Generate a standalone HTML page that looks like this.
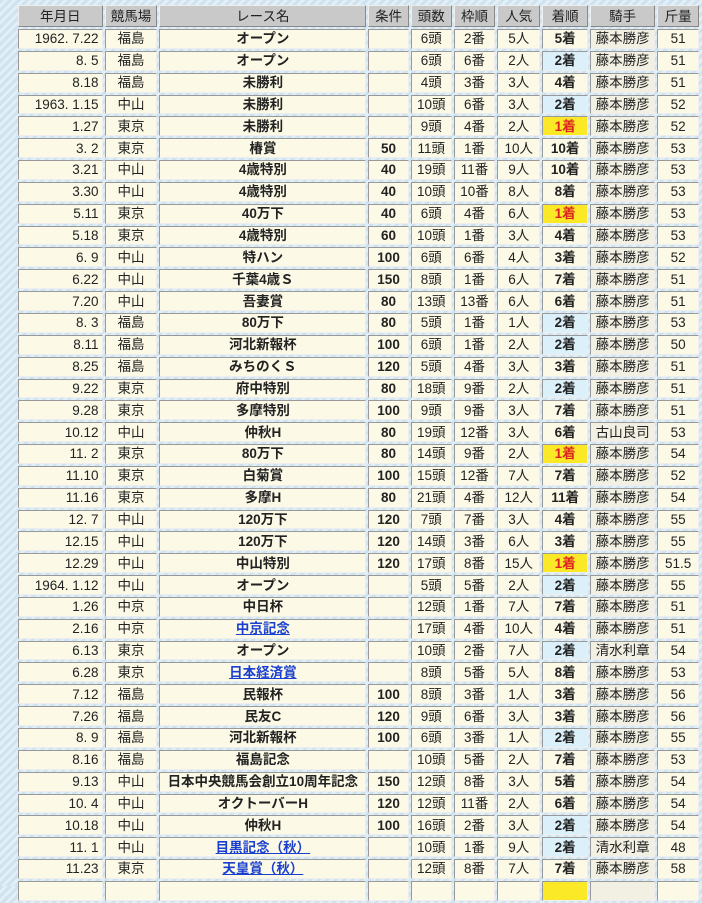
<!DOCTYPE html>
<html><head><meta charset="utf-8"><style>
html,body{margin:0;padding:0;width:702px;height:886px;overflow:hidden}
body{background:#d4e6f2 repeating-linear-gradient(135deg,#cfe2ef 0 3px,#e3eff7 3px 6px);font-family:"Liberation Sans","Noto Sans CJK JP",sans-serif;}
table{position:absolute;left:16px;top:3px;width:685px;border-collapse:separate;border-spacing:2.5px 2.45px;table-layout:fixed;font-size:13.5px;color:#222}
td,th{height:17.85px;padding:0 3px;border:1px solid;border-color:#999 #eee #eee #999;background:#fcfae6;text-align:center;white-space:nowrap;overflow:hidden;line-height:17px;box-sizing:content-box}
th{background:#c9c9c9;font-weight:normal;height:20px;border-color:#eee #888 #888 #eee}
td.d{text-align:right}
td.b{font-weight:bold}
td.r{font-weight:bold}
td.j{background:#f2f0e2}
td.w1{background:#fbe827;color:#d22;font-weight:bold}
td.w2{background:#dcf0fa;font-weight:bold}
a{color:#1a3fd0;text-decoration:underline;font-weight:bold}
</style></head><body>
<table>
<colgroup><col style="width:83px"><col style="width:52px"><col style="width:203px"><col style="width:40px"><col style="width:40px"><col style="width:41px"><col style="width:42px"><col style="width:45px"><col style="width:64px"><col style="width:41px"></colgroup>
<tr><th>年月日</th><th>競馬場</th><th>レース名</th><th>条件</th><th>頭数</th><th>枠順</th><th>人気</th><th>着順</th><th>騎手</th><th>斤量</th></tr>
<tr><td class="d">1962. 7.22</td><td>福島</td><td class="b">オープン</td><td class="b"></td><td>6頭</td><td>2番</td><td>5人</td><td class="r">5着</td><td class="j">藤本勝彦</td><td>51</td></tr>
<tr><td class="d">8. 5</td><td>福島</td><td class="b">オープン</td><td class="b"></td><td>6頭</td><td>6番</td><td>2人</td><td class="w2">2着</td><td class="j">藤本勝彦</td><td>51</td></tr>
<tr><td class="d">8.18</td><td>福島</td><td class="b">未勝利</td><td class="b"></td><td>4頭</td><td>3番</td><td>3人</td><td class="r">4着</td><td class="j">藤本勝彦</td><td>51</td></tr>
<tr><td class="d">1963. 1.15</td><td>中山</td><td class="b">未勝利</td><td class="b"></td><td>10頭</td><td>6番</td><td>3人</td><td class="w2">2着</td><td class="j">藤本勝彦</td><td>52</td></tr>
<tr><td class="d">1.27</td><td>東京</td><td class="b">未勝利</td><td class="b"></td><td>9頭</td><td>4番</td><td>2人</td><td class="w1">1着</td><td class="j">藤本勝彦</td><td>52</td></tr>
<tr><td class="d">3. 2</td><td>東京</td><td class="b">椿賞</td><td class="b">50</td><td>11頭</td><td>1番</td><td>10人</td><td class="r">10着</td><td class="j">藤本勝彦</td><td>53</td></tr>
<tr><td class="d">3.21</td><td>中山</td><td class="b">4歳特別</td><td class="b">40</td><td>19頭</td><td>11番</td><td>9人</td><td class="r">10着</td><td class="j">藤本勝彦</td><td>53</td></tr>
<tr><td class="d">3.30</td><td>中山</td><td class="b">4歳特別</td><td class="b">40</td><td>10頭</td><td>10番</td><td>8人</td><td class="r">8着</td><td class="j">藤本勝彦</td><td>53</td></tr>
<tr><td class="d">5.11</td><td>東京</td><td class="b">40万下</td><td class="b">40</td><td>6頭</td><td>4番</td><td>6人</td><td class="w1">1着</td><td class="j">藤本勝彦</td><td>53</td></tr>
<tr><td class="d">5.18</td><td>東京</td><td class="b">4歳特別</td><td class="b">60</td><td>10頭</td><td>1番</td><td>3人</td><td class="r">4着</td><td class="j">藤本勝彦</td><td>53</td></tr>
<tr><td class="d">6. 9</td><td>中山</td><td class="b">特ハン</td><td class="b">100</td><td>6頭</td><td>6番</td><td>4人</td><td class="r">3着</td><td class="j">藤本勝彦</td><td>52</td></tr>
<tr><td class="d">6.22</td><td>中山</td><td class="b">千葉4歳Ｓ</td><td class="b">150</td><td>8頭</td><td>1番</td><td>6人</td><td class="r">7着</td><td class="j">藤本勝彦</td><td>51</td></tr>
<tr><td class="d">7.20</td><td>中山</td><td class="b">吾妻賞</td><td class="b">80</td><td>13頭</td><td>13番</td><td>6人</td><td class="r">6着</td><td class="j">藤本勝彦</td><td>51</td></tr>
<tr><td class="d">8. 3</td><td>福島</td><td class="b">80万下</td><td class="b">80</td><td>5頭</td><td>1番</td><td>1人</td><td class="w2">2着</td><td class="j">藤本勝彦</td><td>53</td></tr>
<tr><td class="d">8.11</td><td>福島</td><td class="b">河北新報杯</td><td class="b">100</td><td>6頭</td><td>1番</td><td>2人</td><td class="w2">2着</td><td class="j">藤本勝彦</td><td>50</td></tr>
<tr><td class="d">8.25</td><td>福島</td><td class="b">みちのくＳ</td><td class="b">120</td><td>5頭</td><td>4番</td><td>3人</td><td class="r">3着</td><td class="j">藤本勝彦</td><td>51</td></tr>
<tr><td class="d">9.22</td><td>東京</td><td class="b">府中特別</td><td class="b">80</td><td>18頭</td><td>9番</td><td>2人</td><td class="w2">2着</td><td class="j">藤本勝彦</td><td>51</td></tr>
<tr><td class="d">9.28</td><td>東京</td><td class="b">多摩特別</td><td class="b">100</td><td>9頭</td><td>9番</td><td>3人</td><td class="r">7着</td><td class="j">藤本勝彦</td><td>51</td></tr>
<tr><td class="d">10.12</td><td>中山</td><td class="b">仲秋H</td><td class="b">80</td><td>19頭</td><td>12番</td><td>3人</td><td class="r">6着</td><td class="j">古山良司</td><td>53</td></tr>
<tr><td class="d">11. 2</td><td>東京</td><td class="b">80万下</td><td class="b">80</td><td>14頭</td><td>9番</td><td>2人</td><td class="w1">1着</td><td class="j">藤本勝彦</td><td>54</td></tr>
<tr><td class="d">11.10</td><td>東京</td><td class="b">白菊賞</td><td class="b">100</td><td>15頭</td><td>12番</td><td>7人</td><td class="r">7着</td><td class="j">藤本勝彦</td><td>52</td></tr>
<tr><td class="d">11.16</td><td>東京</td><td class="b">多摩H</td><td class="b">80</td><td>21頭</td><td>4番</td><td>12人</td><td class="r">11着</td><td class="j">藤本勝彦</td><td>54</td></tr>
<tr><td class="d">12. 7</td><td>中山</td><td class="b">120万下</td><td class="b">120</td><td>7頭</td><td>7番</td><td>3人</td><td class="r">4着</td><td class="j">藤本勝彦</td><td>55</td></tr>
<tr><td class="d">12.15</td><td>中山</td><td class="b">120万下</td><td class="b">120</td><td>14頭</td><td>3番</td><td>6人</td><td class="r">3着</td><td class="j">藤本勝彦</td><td>55</td></tr>
<tr><td class="d">12.29</td><td>中山</td><td class="b">中山特別</td><td class="b">120</td><td>17頭</td><td>8番</td><td>15人</td><td class="w1">1着</td><td class="j">藤本勝彦</td><td>51.5</td></tr>
<tr><td class="d">1964. 1.12</td><td>中山</td><td class="b">オープン</td><td class="b"></td><td>5頭</td><td>5番</td><td>2人</td><td class="w2">2着</td><td class="j">藤本勝彦</td><td>55</td></tr>
<tr><td class="d">1.26</td><td>中京</td><td class="b">中日杯</td><td class="b"></td><td>12頭</td><td>1番</td><td>7人</td><td class="r">7着</td><td class="j">藤本勝彦</td><td>51</td></tr>
<tr><td class="d">2.16</td><td>中京</td><td><a>中京記念</a></td><td class="b"></td><td>17頭</td><td>4番</td><td>10人</td><td class="r">4着</td><td class="j">藤本勝彦</td><td>51</td></tr>
<tr><td class="d">6.13</td><td>東京</td><td class="b">オープン</td><td class="b"></td><td>10頭</td><td>2番</td><td>7人</td><td class="w2">2着</td><td class="j">清水利章</td><td>54</td></tr>
<tr><td class="d">6.28</td><td>東京</td><td><a>日本経済賞</a></td><td class="b"></td><td>8頭</td><td>5番</td><td>5人</td><td class="r">8着</td><td class="j">藤本勝彦</td><td>53</td></tr>
<tr><td class="d">7.12</td><td>福島</td><td class="b">民報杯</td><td class="b">100</td><td>8頭</td><td>3番</td><td>1人</td><td class="r">3着</td><td class="j">藤本勝彦</td><td>56</td></tr>
<tr><td class="d">7.26</td><td>福島</td><td class="b">民友C</td><td class="b">120</td><td>9頭</td><td>6番</td><td>3人</td><td class="r">3着</td><td class="j">藤本勝彦</td><td>56</td></tr>
<tr><td class="d">8. 9</td><td>福島</td><td class="b">河北新報杯</td><td class="b">100</td><td>6頭</td><td>3番</td><td>1人</td><td class="w2">2着</td><td class="j">藤本勝彦</td><td>55</td></tr>
<tr><td class="d">8.16</td><td>福島</td><td class="b">福島記念</td><td class="b"></td><td>10頭</td><td>5番</td><td>2人</td><td class="r">7着</td><td class="j">藤本勝彦</td><td>53</td></tr>
<tr><td class="d">9.13</td><td>中山</td><td class="b">日本中央競馬会創立10周年記念</td><td class="b">150</td><td>12頭</td><td>8番</td><td>3人</td><td class="r">5着</td><td class="j">藤本勝彦</td><td>54</td></tr>
<tr><td class="d">10. 4</td><td>中山</td><td class="b">オクトーバーH</td><td class="b">120</td><td>12頭</td><td>11番</td><td>2人</td><td class="r">6着</td><td class="j">藤本勝彦</td><td>54</td></tr>
<tr><td class="d">10.18</td><td>中山</td><td class="b">仲秋H</td><td class="b">100</td><td>16頭</td><td>2番</td><td>3人</td><td class="w2">2着</td><td class="j">藤本勝彦</td><td>54</td></tr>
<tr><td class="d">11. 1</td><td>中山</td><td><a>目黒記念（秋）</a></td><td class="b"></td><td>10頭</td><td>1番</td><td>9人</td><td class="w2">2着</td><td class="j">清水利章</td><td>48</td></tr>
<tr><td class="d">11.23</td><td>東京</td><td><a>天皇賞（秋）</a></td><td class="b"></td><td>12頭</td><td>8番</td><td>7人</td><td class="r">7着</td><td class="j">藤本勝彦</td><td>58</td></tr>
<tr><td class="d"></td><td></td><td></td><td></td><td></td><td></td><td></td><td class="w1"></td><td class="j"></td><td></td></tr>
</table>
</body></html>
